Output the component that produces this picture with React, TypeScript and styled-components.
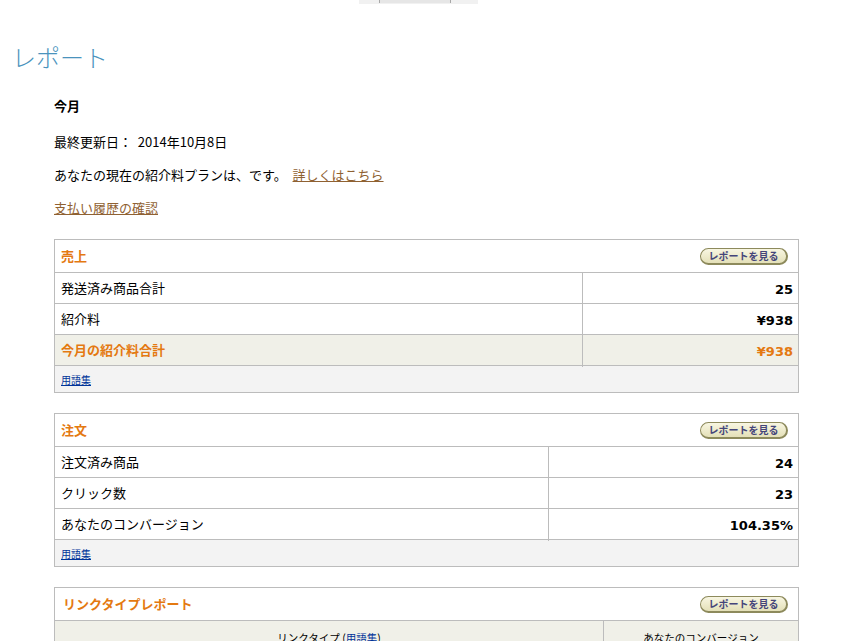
import * as React from 'react'
import styled, { createGlobalStyle, css } from 'styled-components'

const GlobalStyle = createGlobalStyle`
  body {
    margin: 0;
    background: #fff;
    color: #000;
    font-family: "Noto Sans CJK JP", "Noto Sans", sans-serif;
    font-size: 13px;
  }
`

type Row = { label: string; value: string; total?: boolean }

const sales: Row[] = [
  { label: '発送済み商品合計', value: '25' },
  { label: '紹介料', value: '¥938' },
  { label: '今月の紹介料合計', value: '¥938', total: true },
]

const orders: Row[] = [
  { label: '注文済み商品', value: '24' },
  { label: 'クリック数', value: '23' },
  { label: 'あなたのコンバージョン', value: '104.35%' },
]

export default function App() {
  return (
    <>
      <GlobalStyle />
      <TopStrip>
        <div className="tab" />
      </TopStrip>
      <Page>
        <Title>レポート</Title>
        <Content>
          <Intro>
            <Month>今月</Month>
            <Line>最終更新日：&nbsp;&nbsp;2014年10月8日</Line>
            <Line>
              あなたの現在の紹介料プランは、です。&nbsp;&nbsp;<BrownLink href="#">詳しくはこちら</BrownLink>
            </Line>
            <Line>
              <BrownLink href="#">支払い履歴の確認</BrownLink>
            </Line>
          </Intro>

          <Box>
            <BoxHeader>
              <span className="title">売上</span>
              <ReportButton>レポートを見る</ReportButton>
            </BoxHeader>
            {sales.map((r) => (
              <DataRow key={r.label} split={527} total={r.total}>
                <div className="label">{r.label}</div>
                <div className="value">{r.value}</div>
              </DataRow>
            ))}
            <BoxFooter>
              <a href="#">用語集</a>
            </BoxFooter>
          </Box>

          <Box>
            <BoxHeader>
              <span className="title">注文</span>
              <ReportButton>レポートを見る</ReportButton>
            </BoxHeader>
            {orders.map((r) => (
              <DataRow key={r.label} split={493}>
                <div className="label">{r.label}</div>
                <div className="value">{r.value}</div>
              </DataRow>
            ))}
            <BoxFooter>
              <a href="#">用語集</a>
            </BoxFooter>
          </Box>

          <Box>
            <BoxHeader>
              <span className="title wide">リンクタイプレポート</span>
              <ReportButton>レポートを見る</ReportButton>
            </BoxHeader>
            <HeadRow split={548}>
              <div>
                リンクタイプ (<a href="#">用語集</a>)
              </div>
              <div>あなたのコンバージョン</div>
            </HeadRow>
          </Box>
        </Content>
      </Page>
    </>
  )
}

const TopStrip = styled.div`
  height: 4px;
  margin-left: 359px;
  width: 119px;
  background: #f1f1f1;
  display: flex;

  > .tab {
    margin-left: 20px;
    width: 70px;
    height: 3px;
    background: #e6e6e6;
    border-left: 1px solid #a8a8a8;
    border-right: 1px solid #a8a8a8;
  }
`

const Page = styled.div`
  padding: 38px 14px 0;
`

const Title = styled.h1`
  margin: 0 0 25px -2px;
  font-size: 24px;
  line-height: 30px;
  font-weight: 300;
  color: #4a93bd;
`

const Content = styled.div`
  padding-left: 40px;
  width: 745px;
`

const Intro = styled.div`
  margin-bottom: 22px;
`

const Month = styled.div`
  font-weight: bold;
  line-height: 18px;
  margin-bottom: 18px;
`

const Line = styled.div`
  line-height: 18px;
  & + & {
    margin-top: 15px;
  }
`

const BrownLink = styled.a`
  color: #8f6132;
  text-decoration: underline;
`

const Box = styled.div`
  border: 1px solid #bcbcbc;
  margin-bottom: 20px;
`

const BoxHeader = styled.div`
  height: 32px;
  border-bottom: 1px solid #bcbcbc;
  display: flex;
  align-items: center;
  justify-content: space-between;
  padding: 0 10px 0 6px;

  > .title {
    color: #e47911;
    font-weight: bold;
    line-height: 18px;
  }
  > .title.wide {
    padding-left: 2px;
  }
`

const ReportButton = styled.button`
  height: 17px;
  width: 88px;
  padding: 0;
  border: 1px solid #8d8a5c;
  border-right-width: 2px;
  border-bottom-width: 2px;
  border-radius: 9px;
  background: linear-gradient(#f8f6e2, #e4e0b8);
  color: #45457a;
  font-family: "Noto Sans CJK JP", sans-serif;
  font-size: 10px;
  font-weight: bold;
  line-height: 13px;
  cursor: pointer;
`

const DataRow = styled.div<{ split: number; total?: boolean }>`
  display: grid;
  grid-template-columns: ${(p) => p.split}px 1fr;
  height: 30px;
  border-bottom: 1px solid #bcbcbc;
  background: #fff;

  > .label {
    padding-left: 6px;
    line-height: 30px;
  }
  > .value {
    border-left: 1px solid #bcbcbc;
    text-align: right;
    padding-right: 5px;
    line-height: 30px;
    font-family: "DejaVu Sans", Verdana, sans-serif;
    font-weight: bold;
    font-size: 13px;
    padding-top: 2px;
  }

  ${(p) =>
    p.total &&
    css`
      background: #f0f0e8;
      color: #e47911;
      > .label {
        font-weight: bold;
      }
    `}
`

const BoxFooter = styled.div`
  height: 26px;
  background: #f3f3f3;
  display: flex;
  align-items: center;
  padding-left: 6px;

  > a {
    color: #003399;
    font-size: 10px;
    text-decoration: underline;
  }
`

const HeadRow = styled.div<{ split: number }>`
  display: grid;
  grid-template-columns: ${(p) => p.split}px 1fr;
  height: 30px;
  background: #f0f0e8;
  font-size: 10.5px;

  > div {
    text-align: center;
    line-height: 30px;
    padding-top: 2px;
  }
  > div + div {
    border-left: 1px solid #bcbcbc;
  }
  a {
    color: #003399;
    text-decoration: none;
  }
`
